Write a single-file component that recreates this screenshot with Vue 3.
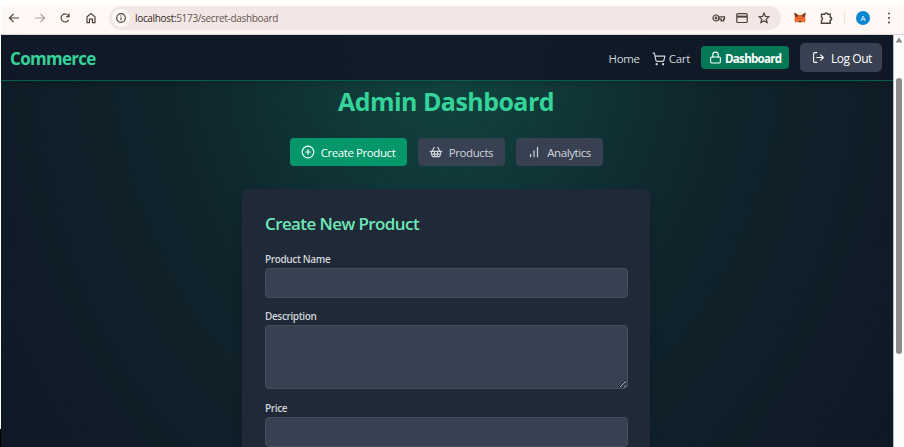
<script setup>
const fields = [
  { label: 'Product Name', kind: 'input' },
  { label: 'Description', kind: 'textarea' },
  { label: 'Price', kind: 'input' },
]
</script>

<template>
  <div class="window">
    <header class="toolbar">
      <div class="nav-icons">
        <svg viewBox="0 0 12 12"><path d="M11 6H1.5M5.6 1.8 1.4 6l4.2 4.2" /></svg>
        <svg viewBox="0 0 12 12" class="faded"><path d="M1 6h9.5M6.4 1.8 10.6 6l-4.2 4.2" /></svg>
        <svg viewBox="0 0 12 12"><path d="M9.6 8A4 4 0 1 1 9.3 3.5L10 4.4M10.1 1.6v3H7.1" /></svg>
        <svg viewBox="0 0 12 12"><path d="M2 10.7V4.9L6 1.5l4 3.4v5.8H7.5V7.2h-3v3.5Z" /></svg>
      </div>
      <div class="address">
        <span class="info"><svg viewBox="0 0 12 12"><circle cx="6" cy="6" r="4.3" /><path d="M6 5.5v2.8M6 3.5v1.1" /></svg></span>
        <span class="url"><b>localhost:</b>5173/secret-dashboard</span>
        <div class="address-icons">
          <svg viewBox="0 0 14 12"><circle cx="4" cy="6" r="3" /><circle cx="4" cy="6" r=".8" /><path d="M6.8 4.9h5.7v2.2h-1v1.7H9.2V7.1H6.8" /></svg>
          <svg viewBox="0 0 12 12"><rect x=".8" y="1.7" width="10.4" height="8.8" rx="1" /><path d="M1 4.6h10" class="thick" /></svg>
          <svg viewBox="0 0 12 12"><path d="m6 1.1 1.4 3.3 3.6.3-2.7 2.4.8 3.5L6 8.8l-3.1 1.8.8-3.5L1 4.7l3.6-.3Z" /></svg>
        </div>
      </div>
      <svg class="fox" viewBox="0 0 12 11">
        <path fill="#e9662c" d="M.4.5 4.5 3h3L11.6.5 11 5l.7 3-1 2.5-2.6-.8-1 .8H4.9l-1-.8-2.6.8-1-2.5L1 5Z" />
        <path fill="#763d22" d="m.4.5 3.8 2.7L3.4 5 1 5ZM11.6.5 7.8 3.2 8.6 5 11 5Z" />
        <path fill="#f47b36" d="M1 6.5h2.8l.5 2.3-3 .8ZM11 6.5H8.2l-.5 2.3 3 .8Z" />
        <path fill="#25353d" d="m3.1 5.7 1.3.7-1 .3Zm5.8 0-1.3.7 1 .3ZM4.9 9h2.2v1H4.9Z" />
      </svg>
      <svg class="puzzle" viewBox="0 0 13 12"><path d="M1.5 2.2h3.2a1.5 1.3 0 0 1 3 0h2.5v3a1.5 1.5 0 0 1 0 3v3H1.5V8.3a1.6 1.6 0 0 0 0-3Z" /></svg>
      <i class="divider"></i>
      <span class="avatar">A</span>
      <svg class="dots" viewBox="0 0 4 12"><circle cx="2" cy="1.6" r="1" /><circle cx="2" cy="6" r="1" /><circle cx="2" cy="10.4" r="1" /></svg>
    </header>

    <div class="viewport">
      <div class="edge"></div>
      <div class="page">
        <nav class="navbar">
          <a class="brand">Commerce</a>
          <div class="links">
            <a class="home">Home</a>
            <a class="cart">
              <svg class="lucide" viewBox="0 0 24 24"><circle cx="8" cy="21" r="1" /><circle cx="19" cy="21" r="1" /><path d="M2.05 2.05h2l2.66 12.42a2 2 0 0 0 2 1.58h9.78a2 2 0 0 0 1.95-1.57l1.65-7.43H5.12" /></svg>
              <span>Cart</span>
            </a>
            <a class="dash">
              <svg class="lucide" viewBox="0 0 24 24"><rect width="18" height="11" x="3" y="11" rx="2" /><path d="M7 11V7a5 5 0 0 1 10 0v4" /></svg>
              <span>Dashboard</span>
            </a>
            <button class="logout">
              <svg class="lucide" viewBox="0 0 24 24"><path d="M9 21H5a2 2 0 0 1-2-2V5a2 2 0 0 1 2-2h4M16 17l5-5-5-5M21 12H9" /></svg>
              <span>Log Out</span>
            </button>
          </div>
        </nav>
        <main>
          <h1><span>Admin Dashboard</span></h1>
          <div class="tabs">
            <button class="tab active create">
              <svg class="lucide" viewBox="0 0 24 24"><circle cx="12" cy="12" r="10" /><path d="M8 12h8M12 8v8" /></svg>
              <span>Create Product</span>
            </button>
            <button class="tab products">
              <svg class="lucide" viewBox="0 0 24 24"><path d="m15 11-1 9M19 11l-4-7M2 11h20M3.5 11l1.6 7.4a2 2 0 0 0 2 1.6h9.8a2 2 0 0 0 2-1.6l1.7-7.4M4.5 15.5h15M5 11l4-7M9 11l1 9" /></svg>
              <span>Products</span>
            </button>
            <button class="tab analytics">
              <svg class="lucide" viewBox="0 0 24 24"><path d="M12 20V10M18 20V4M6 20v-4" /></svg>
              <span>Analytics</span>
            </button>
          </div>
          <section class="card">
            <h2><span>Create New Product</span></h2>
            <div v-for="f in fields" :key="f.label" class="field">
              <label>{{ f.label }}</label>
              <textarea v-if="f.kind === 'textarea'"></textarea>
              <input v-else type="text" />
            </div>
          </section>
        </main>
      </div>
      <aside class="scrollbar">
        <svg viewBox="0 0 8 6"><path d="M4 .5 7.5 5.5h-7Z" /></svg>
        <div class="thumb"></div>
      </aside>
    </div>
  </div>
</template>

<style>
body { overflow: hidden; background: #fff; }
</style>

<style scoped>
* { box-sizing: border-box; }
.window { width: 904px; height: 447px; display: flex; flex-direction: column; overflow: hidden; font-family: "Open Sans", "Noto Sans", sans-serif; }
svg { display: block; flex: none; }
span, a { white-space: nowrap; }
.toolbar { height: 35px; flex: none; margin-left: 1px; border-top: 5px solid #fff; border-bottom: 1px solid #ddd5d3; background: #fff8f5; display: flex; align-items: center; padding: 0 0 4px 7px; }
.toolbar svg { fill: none; stroke: #51403b; stroke-width: 1.2; }
.nav-icons { display: flex; gap: 13.5px; width: 101px; }
.nav-icons svg { width: 12px; height: 12px; }
.nav-icons .faded { stroke: #aaa09d; }
.address { width: 672px; height: 24px; border-radius: 12px; background: #f2e7e4; display: flex; align-items: center; padding-left: 3px; }
.info { width: 18px; height: 18px; border-radius: 50%; background: #fff8f5; display: grid; place-items: center; }
.info svg { width: 12px; height: 12px; }
.url { margin-left: 5px; font-size: 10px; letter-spacing: -0.33px; color: #625551; line-height: 14px; }
.url b { font-weight: 400; color: #332824; }
.address-icons { margin-left: auto; margin-right: 11px; display: flex; gap: 10px; align-items: center; }
.address-icons svg { width: 12px; height: 12px; }
.address-icons svg:first-child { width: 14px; }
.toolbar .thick { stroke-width: 2; }
.toolbar .fox { width: 12px; height: 11px; margin-left: 13px; stroke: none; }
.toolbar .puzzle { width: 13px; height: 12px; margin-left: 14px; stroke-width: 1.4; }
.divider { width: 1px; height: 11px; background: #fbdcca; margin-left: 11px; }
.avatar { width: 14px; height: 14px; border-radius: 50%; background: #0a86d1; color: #fff; font-size: 8px; line-height: 14px; text-align: center; margin-left: 11px; }
.toolbar .dots { width: 4px; height: 12px; margin-left: 17px; fill: #51403b; stroke: none; }

.viewport { flex: 1; min-height: 0; display: flex; }
.edge { width: 1px; background: linear-gradient(#fff 394px, #000 394px); }
.page { width: 892px; display: flex; flex-direction: column; overflow: hidden; background: radial-gradient(631px 823px at 50% -14px, rgba(16, 185, 129, 0.3) 0%, rgba(10, 80, 60, 0.2) 45%, rgba(0, 0, 0, 0.1) 100%), #111827; }
.lucide { fill: none; stroke: currentColor; stroke-width: 2; stroke-linecap: round; stroke-linejoin: round; }
.navbar { height: 46px; flex: none; background: rgba(17, 24, 39, 0.9); border-bottom: 1px solid #065f46; box-shadow: 0 3px 7px rgba(0, 0, 0, 0.14); display: flex; align-items: center; justify-content: space-between; padding: 0 11px 0 9px; }
.brand { color: #34d399; font-size: 17px; letter-spacing: -0.7px; font-weight: 700; line-height: 24px; padding-top: 3px; }
.links { display: flex; align-items: center; color: #d1d5db; font-size: 12px; line-height: 17px; letter-spacing: -0.45px; }
.home { padding-top: 1px; font-size: 11.5px; letter-spacing: -0.3px; }
.links .cart { display: flex; align-items: center; gap: 3px; margin-left: 12px; padding-top: 1px; }
.cart span { font-size: 11.5px; letter-spacing: -0.3px; }
.cart svg { width: 14px; height: 14px; margin-top: 2px; }
.dash { width: 88px; height: 23px; margin-left: 11px; border-radius: 4px; background: #047857; color: #fff; font-weight: 700; display: flex; align-items: center; padding: 1px 0 0 8px; gap: 3px; }
.dash span { font-size: 11.5px; letter-spacing: -0.68px; }
.dash svg { width: 13px; height: 13px; margin-top: -1px; }
button { border: 0; font: inherit; padding: 0; }
.logout { width: 82px; height: 29px; margin-left: 11px; border-radius: 5px; background: #374151; color: #fff; display: flex; align-items: center; padding: 1px 0 0 12px; gap: 6px; letter-spacing: -0.45px; }
.logout svg { width: 13px; height: 13px; margin-top: -1px; }
main { flex: 1; min-height: 0; display: flex; flex-direction: column; align-items: center; padding: 5px 2px 0 0; }
h1 { margin: 0; color: #34d399; font-size: 25px; letter-spacing: -0.55px; font-weight: 700; line-height: 30px; }
.tabs { display: flex; gap: 11px; margin: 22px 0 23px; }
.tab { height: 28px; border-radius: 4px; background: #374151; color: #d1d5db; font-size: 11.5px; letter-spacing: -0.42px; display: flex; align-items: center; justify-content: center; gap: 6px; }
.tab svg { width: 14px; height: 14px; }
.tab.active { background: #059669; color: #fff; }
.create { width: 117px; }
.products, .analytics { width: 87px; }
.card { width: 408px; height: 400px; flex: none; border-radius: 6px; background: #1f2937; padding: 23px 22px 0 23px; box-shadow: 0 6px 12px rgba(0, 0, 0, 0.12); }
h2 { margin: 0 0 16px; color: #6ee7b7; font-size: 17px; letter-spacing: -0.6px; line-height: 24px; font-weight: 600; }
.field { display: flex; flex-direction: column; margin-bottom: 11px; }
.field + .field { margin-bottom: 12px; }
label { color: #d1d5db; font-size: 10px; letter-spacing: -0.36px; line-height: 14px; font-weight: 600; margin-bottom: 2px; }
input, textarea { width: 363px; height: 30px; margin: 0; border: 1px solid #444e5d; border-radius: 4px; background: #374151; display: block; }
textarea { height: 64px; resize: vertical; }
.scrollbar { width: 11px; background: #fcfcfc; border-left: 1px solid #b9bcbf; display: flex; flex-direction: column; align-items: center; padding-top: 2px; }
.scrollbar svg { width: 8px; height: 6px; fill: #8b8b8b; }
.thumb { width: 6px; height: 276px; margin-top: 35px; border-radius: 3px; background: #8b8b8b; }
</style>
